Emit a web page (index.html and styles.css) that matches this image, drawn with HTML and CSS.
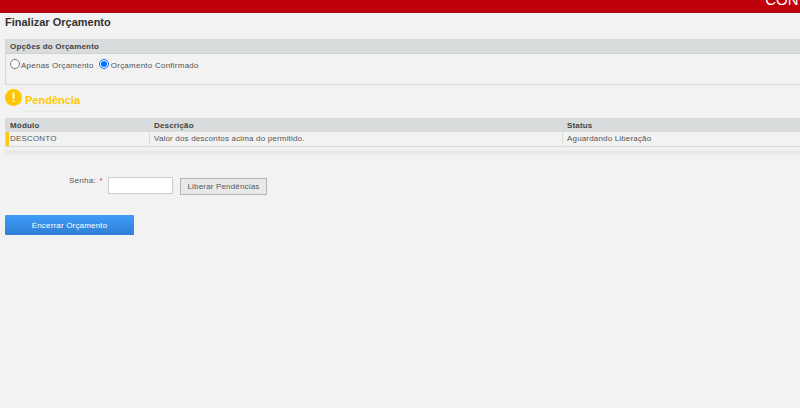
FILE: index.html
```html
<!DOCTYPE html>
<html lang="pt">
<head>
<meta charset="utf-8">
<title>Finalizar Orçamento</title>
<link rel="stylesheet" href="styles.css">
</head>
<body>
<header class="topbar"><span class="topbar-text">CONTATO</span></header>
<main class="page">
  <h1 class="title">Finalizar Orçamento</h1>
  <section class="panel">
    <div class="panel-head">Opções do Orçamento</div>
    <div class="panel-body">
      <label class="opt"><input type="radio" name="t"><span>Apenas Orçamento</span></label>
      <label class="opt"><input type="radio" name="t" checked><span>Orçamento Confirmado</span></label>
    </div>
  </section>
  <div class="pend">
    <svg class="pend-icon" width="17" height="17" viewBox="0 0 17 17"><circle cx="8.5" cy="8.5" r="8.5" fill="#ffc600"/><rect x="7.6" y="3.6" width="1.8" height="6.4" rx=".6" fill="#fff"/><rect x="7.6" y="11.2" width="1.8" height="1.9" fill="#fff"/></svg>
    <h2 class="pend-title">Pendência</h2>
  </div>
  <div class="grid">
    <div class="row head">
      <div class="cell">Módulo</div><div class="cell">Descrição</div><div class="cell">Status</div>
    </div>
    <div class="row body">
      <div class="cell">DESCONTO</div><div class="cell">Valor dos descontos acima do permitido.</div><div class="cell">Aguardando Liberação</div>
    </div>
  </div>
  <div class="grid-foot"></div>
  <form class="pass">
    <label class="pass-label">Senha: <em>*</em></label>
    <input class="pass-input" type="password">
    <button class="btn" type="button">Liberar Pendências</button>
  </form>
  <button class="primary" type="button">Encerrar Orçamento</button>
</main>
</body>
</html>
```
FILE: styles.css
```css
* { box-sizing: border-box; }
html, body { margin: 0; height: 408px; overflow: hidden; }
body { background: #f2f2f2; font-family: "Liberation Sans", Arial, sans-serif; font-size: 8px; color: #555; letter-spacing: .17px; }
.topbar { height: 13px; background: #bd000b; border-bottom: 1px solid #a80a10; overflow: hidden; display: flex; justify-content: flex-end; }
.topbar-text { color: #fff; font-size: 15px; line-height: 15px; letter-spacing: 0; margin-top: -8px; margin-right: -36px; white-space: nowrap; }
.page { padding: 0 0 0 5px; }
.title { margin: 2px 0 0; font-size: 11px; line-height: 15px; font-weight: bold; color: #333; height: 24px; letter-spacing: 0; }
.panel { border: 1px solid #d6d8d8; border-right: 0; height: 46px; }
.panel-head { height: 14px; background: #d9dcdc; border-bottom: 1px solid #cfd2d2; font-weight: bold; line-height: 13px; padding-left: 4px; color: #444; }
.panel-body { display: flex; gap: 5px; padding-top: 5px; }
.opt { display: flex; align-items: flex-start; line-height: 12px; letter-spacing: .24px; }
.opt input { margin: 0 1px 0 4px; width: 10px; height: 10px; }
.opt span { margin-top: 1px; }
.opt + .opt input { margin: 0 2px 0 0; }
.pend { display: flex; align-items: flex-start; gap: 3px; height: 29px; margin-top: 4px; }
.pend-icon { flex: none; }
.pend-title { margin: 4px 0 0; padding-bottom: 4px; font-size: 11px; line-height: 14px; font-weight: bold; color: #ffc800; border-bottom: 1px solid #eaeaea; width: 55px; letter-spacing: 0; }
.grid { height: 29px; border: 1px solid #d6d8d8; border-right: 0; }
.row { display: grid; grid-template-columns: 143px 413px 1fr; }
.cell { padding-left: 4px; border-left: 1px solid #d9dcdc; white-space: nowrap; }
.cell:first-child { border-left: 0; }
.head { height: 13px; background: #d9dcdc; font-weight: bold; line-height: 13px; color: #444; }
.body { height: 14px; line-height: 14px; }
.body .cell:first-child { border-left: 3px solid #ffc61a; padding-left: 1px; }
.grid-foot { height: 5px; margin-top: 3px; background: #e9e9e9; }
.pass { display: flex; align-items: flex-start; height: 38px; margin-top: 22px; }
.pass-label { width: 103px; text-align: right; padding-right: 5px; line-height: 8px; letter-spacing: .3px; word-spacing: 1px; }
.pass-label em { color: #d9301e; font-style: normal; }
.pass-input { width: 65px; height: 17px; border: 1px solid #ccc; background: #fff; padding: 0; margin-right: 7px; }
.btn { width: 87px; height: 17px; padding: 0; margin-top: 1px; background: #e9e9e9; border: 1px solid #b4b4b4; font: 8px "Liberation Sans", Arial, sans-serif; letter-spacing: .17px; color: #555; }
.primary { display: block; width: 129px; height: 20px; padding: 0; border: 0; border-radius: 1px; background: linear-gradient(#3f9cf6, #2f7fd6); color: #fff; font: 8px "Liberation Sans", Arial, sans-serif; letter-spacing: .17px; }
```
